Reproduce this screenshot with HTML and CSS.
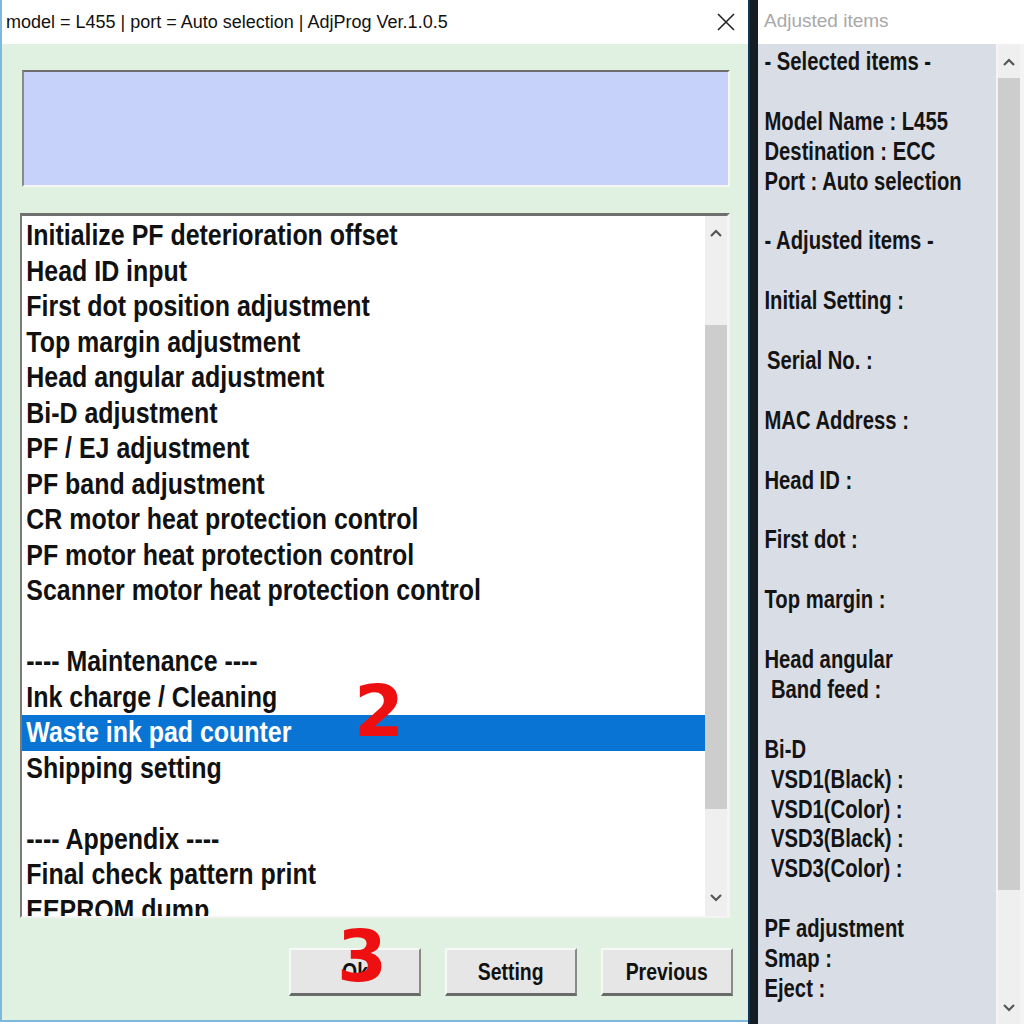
FILE: index.html
```html
<!DOCTYPE html>
<html lang="en">
    <head>
        <meta charset="UTF-8" />
        <title>AdjProg</title>
        <link rel="stylesheet" href="styles.css">
    </head>
    <body>
        <div class="dialog">
            <div class="titlebar">
                <span>model = L455 | port = Auto selection | AdjProg Ver.1.0.5</span>
                <svg class="close" width="20" height="20" viewBox="0 0 20 20"><path d="M2 2 L18 18 M18 2 L2 18" stroke="#222" stroke-width="1.6" fill="none"/></svg>
            </div>
            <div class="dialog-body">
                <div class="info-box"></div>
                <div class="listbox">
                    <div class="items-wrap">
                        <div class="items">
                            <div class="item">Initialize PF deterioration offset</div>
                            <div class="item">Head ID input</div>
                            <div class="item">First dot position adjustment</div>
                            <div class="item">Top margin adjustment</div>
                            <div class="item">Head angular adjustment</div>
                            <div class="item">Bi-D adjustment</div>
                            <div class="item">PF / EJ adjustment</div>
                            <div class="item">PF band adjustment</div>
                            <div class="item">CR motor heat protection control</div>
                            <div class="item">PF motor heat protection control</div>
                            <div class="item">Scanner motor heat protection control</div>
                            <div class="item"></div>
                            <div class="item">---- Maintenance ----</div>
                            <div class="item">Ink charge / Cleaning</div>
                            <div class="item selected">Waste ink pad counter</div>
                            <div class="item">Shipping setting</div>
                            <div class="item"></div>
                            <div class="item">---- Appendix ----</div>
                            <div class="item">Final check pattern print</div>
                            <div class="item">EEPROM dump</div>
                        </div>
                    </div>
                    <div class="scrollbar list-scroll">
                        <svg class="arrow" width="12" height="8" viewBox="0 0 12 8"><path d="M1 7 L6 2 L11 7" stroke="#555" stroke-width="2.2" fill="none"/></svg>
                        <div class="track"><div class="thumb"></div></div>
                        <svg class="arrow" width="12" height="8" viewBox="0 0 12 8"><path d="M1 1 L6 6 L11 1" stroke="#555" stroke-width="2.2" fill="none"/></svg>
                    </div>
                </div>
                <div class="buttons">
                    <button class="btn"><span>Ok</span></button>
                    <button class="btn"><span>Setting</span></button>
                    <button class="btn"><span>Previous</span></button>
                </div>
            </div>
            <span class="mark mark-2">2</span>
            <span class="mark mark-3">3</span>
        </div>
        <div class="divider"></div>
        <div class="side">
            <div class="side-title">Adjusted items</div>
            <div class="side-body">
                <div class="side-wrap">
                    <div class="side-text">
                        <div>- Selected items -</div>
                        <div class="gap"></div>
                        <div>Model Name : L455</div>
                        <div>Destination : ECC</div>
                        <div>Port : Auto selection</div>
                        <div class="gap"></div>
                        <div>- Adjusted items -</div>
                        <div class="gap"></div>
                        <div>Initial Setting :</div>
                        <div class="gap"></div>
                        <div class="ind1">Serial No. :</div>
                        <div class="gap"></div>
                        <div>MAC Address :</div>
                        <div class="gap"></div>
                        <div>Head ID :</div>
                        <div class="gap"></div>
                        <div>First dot :</div>
                        <div class="gap"></div>
                        <div>Top margin :</div>
                        <div class="gap"></div>
                        <div>Head angular</div>
                        <div class="ind2">Band feed :</div>
                        <div class="gap"></div>
                        <div>Bi-D</div>
                        <div class="ind2">VSD1(Black) :</div>
                        <div class="ind2">VSD1(Color) :</div>
                        <div class="ind2">VSD3(Black) :</div>
                        <div class="ind2">VSD3(Color) :</div>
                        <div class="gap"></div>
                        <div>PF adjustment</div>
                        <div>Smap :</div>
                        <div>Eject :</div>
                    </div>
                </div>
                <div class="scrollbar side-scroll">
                    <svg class="arrow" width="12" height="8" viewBox="0 0 12 8"><path d="M1 7 L6 2 L11 7" stroke="#555" stroke-width="2.2" fill="none"/></svg>
                    <div class="track"><div class="thumb"></div></div>
                    <svg class="arrow" width="12" height="8" viewBox="0 0 12 8"><path d="M1 1 L6 6 L11 1" stroke="#555" stroke-width="2.2" fill="none"/></svg>
                </div>
            </div>
        </div>
    </body>
</html>
```

FILE: styles.css
```css
body {
    margin: 0;
    display: flex;
    height: 1024px;
    overflow: hidden;
    font-family: "Liberation Sans", Arial, sans-serif;
    background-color: #ffffff;
}

/* left dialog */
.dialog {
    flex: none;
    position: relative;
    width: 746px;
    height: 1020px;
    border-left: 2px solid #7fb8de;
    border-bottom: 2px solid #7fb8de;
    background-color: #e1f1e1;
    display: flex;
    flex-direction: column;
}
.titlebar {
    height: 44px;
    background-color: #ffffff;
    display: flex;
    align-items: center;
    justify-content: space-between;
    padding: 0 10px 0 4px;
    font-size: 18px;
    color: #111;
}
.close {
    margin-right: 2px;
}
.dialog-body {
    flex: 1;
    padding: 26px 18px 0 18px;
    display: flex;
    flex-direction: column;
}
.info-box {
    height: 113px;
    margin-left: 2px;
    background-color: #c6d2fa;
    border-top: 2px solid #6e6e6e;
    border-left: 2px solid #8a8a8a;
    border-bottom: 2px solid #f6f6f6;
    border-right: 2px solid #f6f6f6;
}
.listbox {
    margin-top: 26px;
    height: 700px;
    display: flex;
    background-color: #ffffff;
    border-top: 3px solid #707070;
    border-left: 2px solid #7a7a7a;
    border-bottom: 2px solid #f4f4f4;
    border-right: 3px solid #f4f4f4;
    overflow: hidden;
}
.items-wrap {
    flex: 1;
    min-width: 0;
    overflow: hidden;
}
/* the original font is a narrow face, so the list is squeezed sideways */
.items {
    width: 117%;
    padding-top: 2px;
    font-weight: bold;
    font-size: 29px;
    color: #111;
    transform: scaleX(0.86);
    transform-origin: left top;
}
.item {
    height: 35.5px;
    line-height: 35.5px;
    padding-left: 5px;
    white-space: nowrap;
}
.item.selected {
    background-color: #0a74d4;
    color: #ffffff;
}
.scrollbar {
    flex: none;
    width: 22px;
    background-color: #efeff0;
    display: flex;
    flex-direction: column;
    align-items: center;
}
.scrollbar .arrow {
    flex: none;
}
.track {
    flex: 1;
    width: 100%;
    display: flex;
    flex-direction: column;
}
.thumb {
    background-color: #cdcdcd;
    width: 100%;
}
.list-scroll .arrow:first-child {
    margin: 13px 0 0;
}
.list-scroll .track {
    padding: 88px 0 85px;
}
.list-scroll .thumb {
    flex: 1;
}
.list-scroll .arrow:last-child {
    margin-bottom: 14px;
}
.buttons {
    display: flex;
    justify-content: flex-end;
    gap: 24px;
    margin-top: 30px;
    margin-right: -3px;
}
.btn {
    width: 132px;
    height: 48px;
    background-color: #e6e6e6;
    border-top: 2px solid #f8f8f8;
    border-left: 2px solid #f8f8f8;
    border-bottom: 3px solid #6a6a6a;
    border-right: 2px solid #8a8a8a;
    font-family: "Liberation Sans", Arial, sans-serif;
    font-weight: bold;
    font-size: 24px;
    color: #111;
    padding: 0;
}
.btn span {
    display: inline-block;
    transform: scaleX(0.81);
}
.mark {
    position: absolute;
    font-family: "DejaVu Sans", sans-serif;
    font-weight: bold;
    font-size: 72px;
    line-height: 1;
    color: #ee1010;
}
.mark-2 {
    left: 352px;
    top: 675px;
}
.mark-3 {
    left: 335px;
    top: 920px;
}

/* right panel */
.divider {
    flex: none;
    width: 8px;
    background-color: #141c24;
    border-left: 2px solid #0e3554;
}
.side {
    flex: 1;
    min-width: 0;
    display: flex;
    flex-direction: column;
}
.side-title {
    height: 44px;
    line-height: 42px;
    padding-left: 6px;
    font-size: 19px;
    color: #a8a8a8;
    background-color: #ffffff;
}
.side-body {
    flex: 1;
    display: flex;
    background-color: #d9dde6;
    border-right: 4px solid #f4f4f4;
}
.side-wrap {
    flex: 1;
    min-width: 0;
    overflow: hidden;
}
.side-text {
    width: 124%;
    padding: 3px 0 0 8px;
    font-weight: bold;
    font-size: 25px;
    line-height: 29.9px;
    color: #141414;
    white-space: nowrap;
    transform: scaleX(0.81);
    transform-origin: left top;
}
.gap {
    height: 29.9px;
}
.ind1 {
    padding-left: 3px;
}
.ind2 {
    padding-left: 8px;
}
.side-scroll {
    border-left: 2px solid #f4f4f4;
}
.side-scroll .arrow:first-child {
    margin: 14px 0 12px;
}
.side-scroll .thumb {
    height: 812px;
}
.side-scroll .arrow:last-child {
    margin-bottom: 12px;
}
```
